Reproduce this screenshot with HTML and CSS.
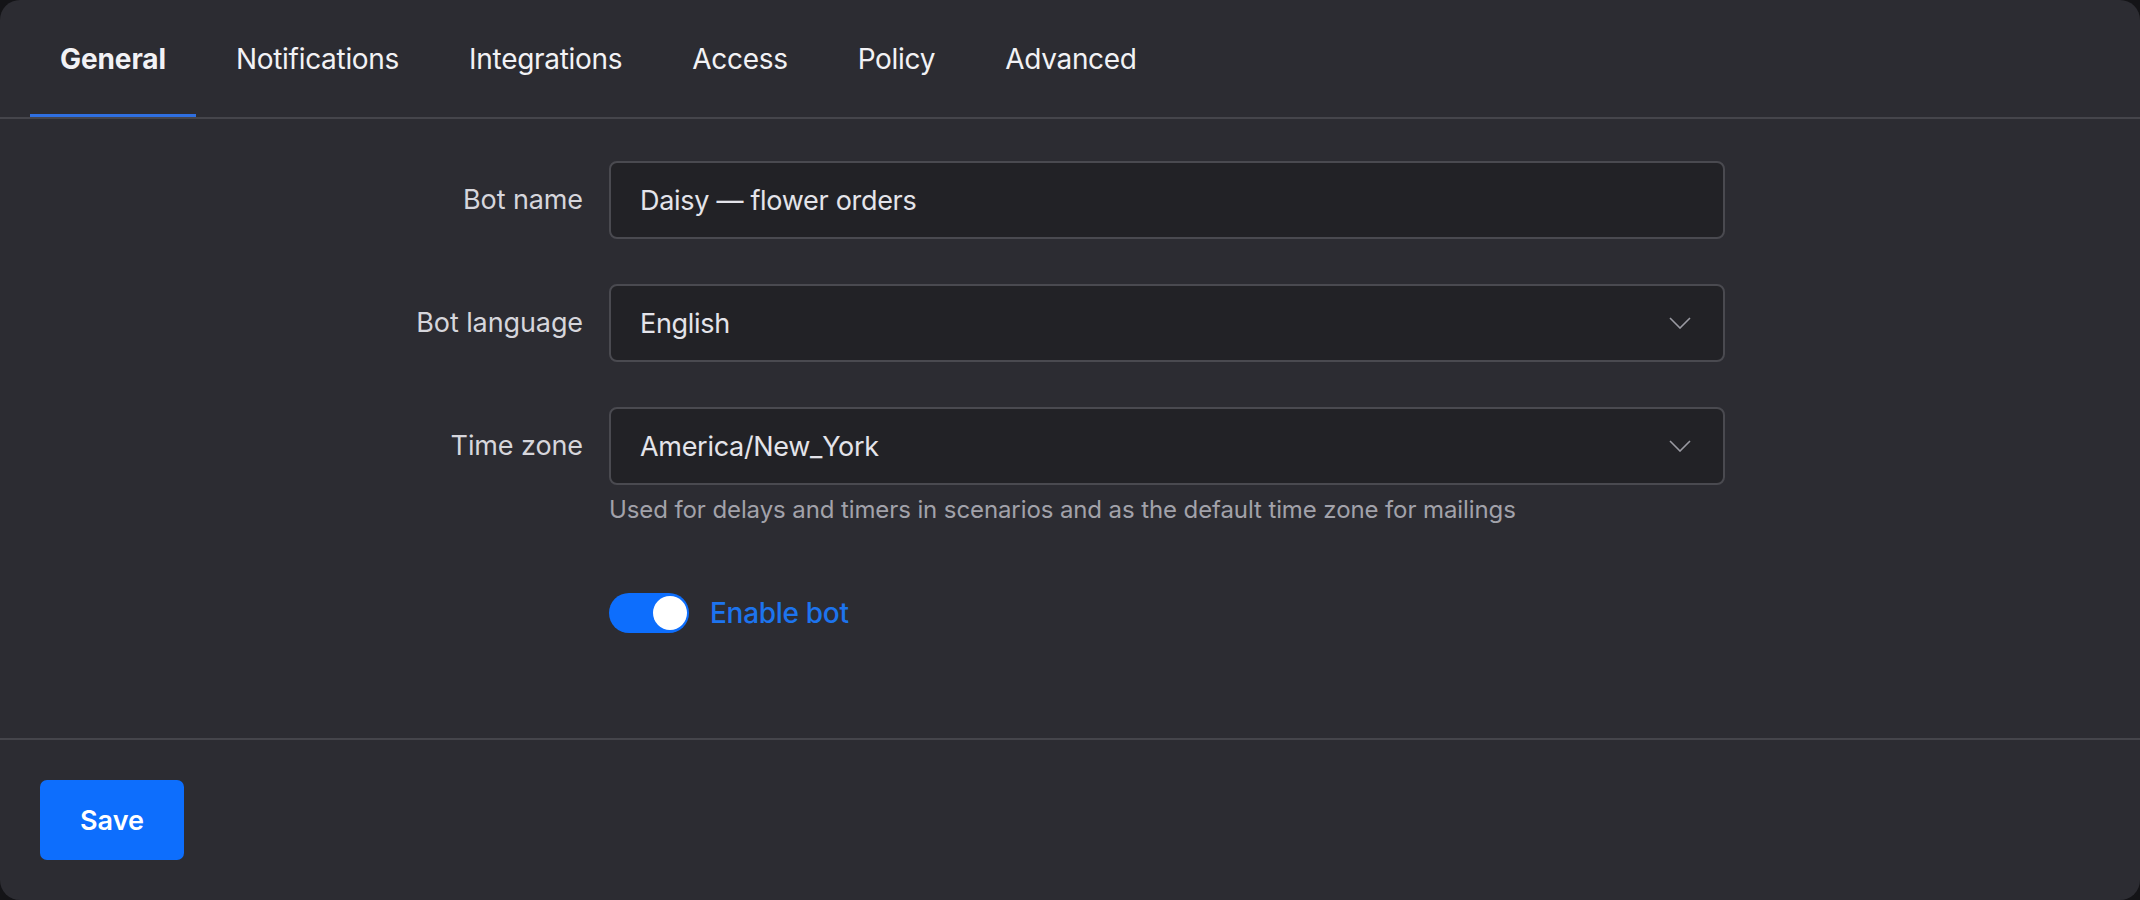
FILE: index.html
```html
<!DOCTYPE html>
<html lang="en">
  <head>
    <meta charset="UTF-8" />
    <meta name="viewport" content="width=device-width, initial-scale=1.0" />
    <title>Bot settings</title>
    <link rel="stylesheet" href="styles.css">
  </head>
  <body>
    <div class="panel">
      <nav class="tabs">
        <a class="tab active" href="#">General</a>
        <a class="tab" href="#">Notifications</a>
        <a class="tab" href="#">Integrations</a>
        <a class="tab" href="#">Access</a>
        <a class="tab" href="#">Policy</a>
        <a class="tab" href="#">Advanced</a>
      </nav>

      <form class="settings" id="settings-form">
        <div class="form-row">
          <label for="bot-name">Bot name</label>
          <input type="text" id="bot-name" class="field" value="Daisy — flower orders" />
        </div>

        <div class="form-row">
          <label for="bot-language">Bot language</label>
          <div class="select">
            <span class="select-value">English</span>
            <svg class="chevron" viewBox="0 0 22 12" width="22" height="12">
              <path d="M1 1 L11 11 L21 1" />
            </svg>
          </div>
        </div>

        <div class="form-row">
          <label for="time-zone">Time zone</label>
          <div>
            <div class="select" id="time-zone">
              <span class="select-value">America/New_York</span>
              <svg class="chevron" viewBox="0 0 22 12" width="22" height="12">
                <path d="M1 1 L11 11 L21 1" />
              </svg>
            </div>
            <p class="hint">Used for delays and timers in scenarios and as the default time zone for mailings</p>
          </div>
        </div>

        <div class="form-row toggle-row">
          <span></span>
          <label class="switch">
            <span class="switch-track"><span class="switch-knob"></span></span>
            <span class="switch-label">Enable bot</span>
          </label>
        </div>
      </form>

      <div class="footer">
        <button type="submit" class="save-btn" form="settings-form">Save</button>
      </div>
    </div>
  </body>
</html>
```

FILE: styles.css
```css
body {
  margin: 0;
  background-color: #141417;
  font-family: Inter, "Noto Sans", sans-serif;
  color: #e4e4ea;
}

.panel {
  height: 900px;
  background-color: #2c2c32;
  border-radius: 20px;
  display: flex;
  flex-direction: column;
  overflow: hidden;
}

.tabs {
  display: flex;
  gap: 10px;
  padding-left: 30px;
  height: 117px;
  border-bottom: 2px solid #45454b;
}

.tab {
  display: flex;
  align-items: center;
  padding: 3px 30px 0;
  border-bottom: 3px solid transparent;
  color: #f2f2f5;
  text-decoration: none;
  font-size: 28px;
  letter-spacing: -0.3px;
}

.tab.active {
  font-weight: 700;
  letter-spacing: -0.1px;
  border-bottom-color: #2f6fe0;
}

.settings {
  flex: 1;
  display: flex;
  flex-direction: column;
  gap: 45px;
  padding-top: 42px;
}

.form-row {
  display: grid;
  grid-template-columns: 583px 1116px;
  column-gap: 26px;
  align-items: start;
}

.form-row > label {
  text-align: right;
  font-size: 27px;
  line-height: 78px;
  letter-spacing: -0.1px;
  color: #d6d6dc;
}

.field,
.select {
  box-sizing: border-box;
  width: 100%;
  height: 78px;
  padding: 0 29px;
  border: 2px solid #4a4a50;
  border-radius: 8px;
  background-color: #222226;
  color: #e4e4ea;
  font-family: inherit;
  font-size: 27px;
  letter-spacing: -0.3px;
}

.select {
  display: flex;
  align-items: center;
  justify-content: space-between;
}

.chevron {
  margin-right: 3px;
}

.chevron path {
  fill: none;
  stroke: #9a9aa2;
  stroke-width: 1.6;
}

.hint {
  margin: 10px 0 0;
  font-size: 24px;
  letter-spacing: -0.1px;
  color: #a2a2aa;
}

.toggle-row {
  margin-top: 5px;
}

.switch {
  display: flex;
  align-items: center;
  gap: 21px;
}

.switch-track {
  display: flex;
  justify-content: flex-end;
  align-items: center;
  box-sizing: border-box;
  width: 80px;
  height: 40px;
  padding: 3px 2px;
  border-radius: 20px;
  background-color: #0d6efd;
}

.switch-knob {
  width: 34px;
  height: 34px;
  border-radius: 50%;
  background-color: #fff;
}

.switch-label {
  font-size: 28px;
  font-weight: 500;
  letter-spacing: -0.3px;
  color: #1d74ee;
}

.footer {
  height: 120px;
  border-top: 2px solid #45454b;
  padding: 40px 0 0 40px;
}

button {
  border: none;
  cursor: pointer;
  font-family: inherit;
}

.save-btn {
  width: 144px;
  height: 80px;
  border-radius: 7px;
  background-color: #0d6efd;
  color: #fff;
  font-size: 27px;
  font-weight: 600;
}
```
